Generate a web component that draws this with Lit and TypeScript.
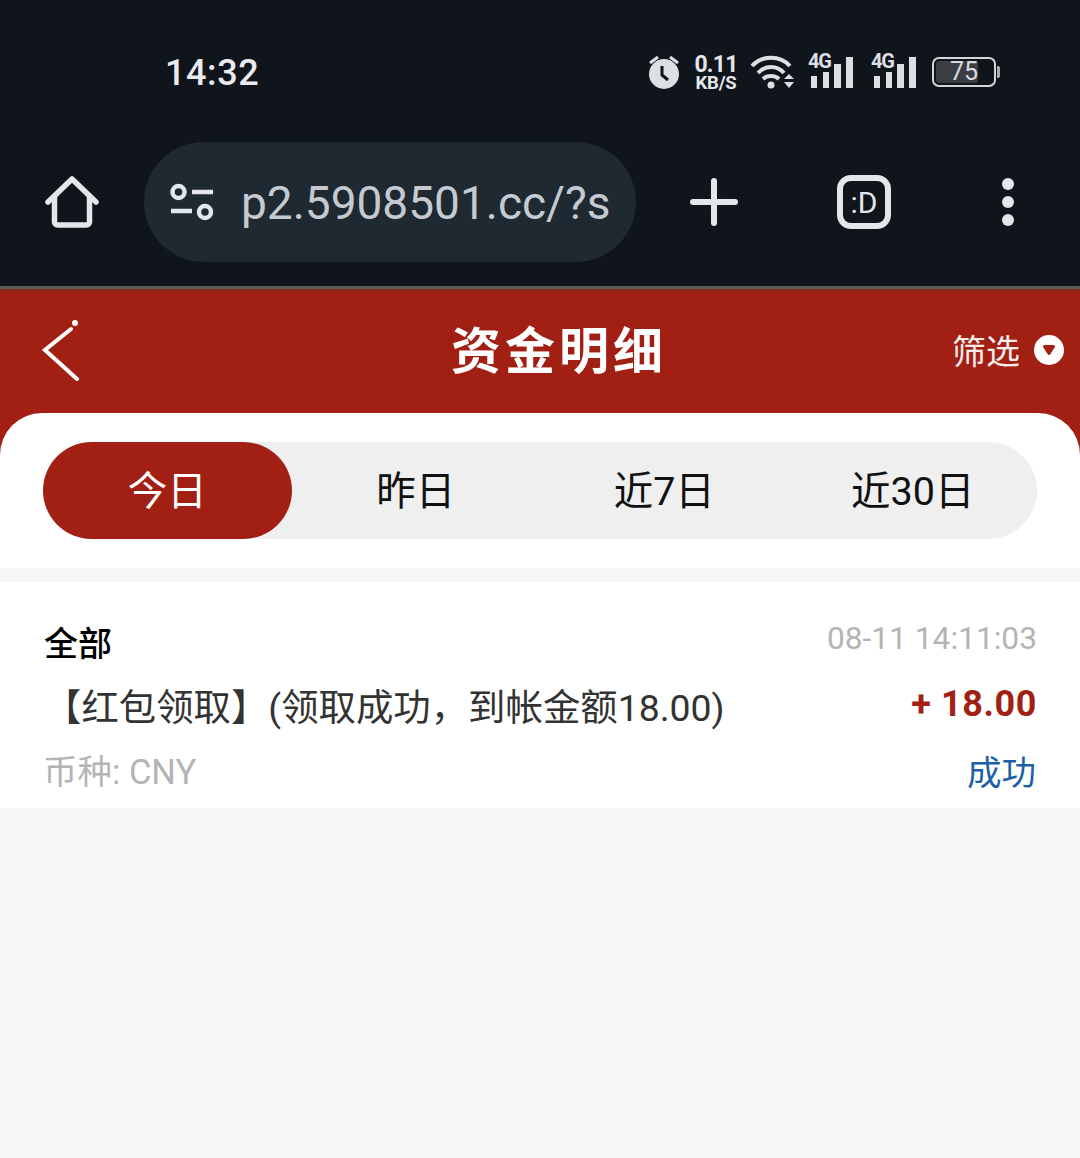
import { LitElement, html, css } from "lit";
import { customElement } from "lit/decorators.js";

@customElement("app-root")
export class AppRoot extends LitElement {
  static styles = css`
    :host { display: block; width: 1080px; height: 1158px; overflow: hidden; background: #f6f6f6;
      font-family: Roboto, "Noto Sans CJK SC", sans-serif; }
    .chrome { height: 286px; background: #10141b; color: #e3e6ea; box-sizing: border-box; }
    .status { height: 142px; display: flex; align-items: center; box-sizing: border-box; padding: 2px 0 0 165px; }
    .time { font-size: 36px; font-weight: 500; letter-spacing: 0.6px; color: #e8eaed; margin-top: 2px; width: 482px; }
    .sicons { display: flex; align-items: center; }
    .sicons svg { display: block; }
    .speed { display: flex; flex-direction: column; align-items: center; margin: 0 13px 0 14px; font-weight: 700; color: #e3e6ea; line-height: 1; width: 42px; }
    .speed b { font-size: 23px; line-height: 22px; letter-spacing: -0.8px; font-weight: 700; }
    .speed i { font-size: 18.5px; line-height: 15px; font-style: normal; letter-spacing: -0.2px; }
    .g4 { position: relative; width: 46px; height: 34px; margin-right: 17px; }
    .g4 span { position: absolute; left: 0; top: -4px; font-size: 20px; line-height: 20px; font-weight: 700; letter-spacing: -1.2px; color: #dcdfe3; }
    .batt { position: relative; width: 64px; height: 30px; border: 2px solid #d3d6da; border-radius: 7px; box-sizing: border-box; margin-left: -2px; }
    .batt .fill { position: absolute; left: 2px; top: 2px; bottom: 2px; width: 42px; border-radius: 3px; background: #3a3d42; }
    .batt .n { position: absolute; left: 0; top: 0; width: 60px; text-align: center; font-size: 25px; line-height: 26px; font-weight: 400; color: #d8dbdf; }
    .cap { width: 3px; height: 12px; background: #a9acb0; border-radius: 0 2px 2px 0; margin-left: 1px; }
    .toolbar { display: flex; align-items: center; height: 120px; padding-left: 44px; }
    .home { width: 56px; margin-right: 44px; }
    .pill { width: 492px; height: 120px; border-radius: 60px; background: #1f2932; display: flex; align-items: center; box-sizing: border-box; padding-left: 25px; }
    .url { font-size: 46px; color: #c4cad0; margin-left: 26px; white-space: nowrap; font-weight: 400; position: relative; top: 1px; }
    .plus { margin-left: 54px; }
    .tab { width: 54px; height: 54px; margin-left: 99px; box-sizing: border-box; border: 6px solid #e3e6ea; border-radius: 14px; display: flex; align-items: center; justify-content: center; font-size: 30px; color: #e3e6ea; }
    .dots { margin-left: 111px; display: flex; flex-direction: column; gap: 6px; }
    .dots i { display: block; width: 12px; height: 12px; border-radius: 50%; background: #e3e6ea; }
    .rule { height: 3px; background: #5f5d5c; }
    .header { height: 124px; background: linear-gradient(#8e2418 0 3px, #a21f14 3px); color: #fff; display: flex; align-items: center; box-sizing: border-box; padding: 0 16px 0 42px; }
    .title { flex: 1; text-align: center; font-size: 50px; font-weight: 700; letter-spacing: 4px; margin-left: 84px; position: relative; top: -4px; }
    .filter { display: flex; align-items: center; font-size: 34px; gap: 14px; color: #f6eceb; margin-top: -3px; }
    .dot { width: 30px; height: 30px; border-radius: 50%; background: #fff; display: flex; align-items: center; justify-content: center; }
    .tabsWrap { background: #a21f14; }
    .tabs { background: #fff; border-radius: 42px 42px 0 0; padding: 29px 43px; height: 155px; box-sizing: border-box; }
    .seg { display: grid; grid-template-columns: repeat(4, 1fr); height: 97px; background: #efefef; border-radius: 49px; }
    .seg div { display: flex; align-items: center; justify-content: center; font-size: 39.5px; color: #111; border-radius: 49px; padding-bottom: 6px; box-sizing: border-box; }
    .seg .on { background: #a21f14; color: #fff; }
    .row { margin-top: 14px; background: #fff; height: 226px; box-sizing: border-box; padding: 0 43px 0 44px; display: grid; grid-template-columns: 1fr auto; grid-template-rows: 82px 82px 62px; }
    .all { font-size: 34px; font-weight: 500; color: #000; align-self: end; line-height: 40px; }
    .dt { font-size: 31.7px; color: #b4b4b4; align-self: end; line-height: 40px; margin-bottom: 5px; }
    .desc { font-size: 37.4px; color: #333; line-height: 62px; white-space: nowrap; margin-top: 13px; }
    .amt { font-size: 36px; font-weight: 700; color: #a21f14; line-height: 60px; text-align: right; letter-spacing: 0.6px; margin-top: 10px; }
    .cur { font-size: 34.5px; color: #b4b4b4; line-height: 52px; margin-left: -1px; }
    .st { font-size: 34.5px; color: #1d5fa8; line-height: 54px; text-align: right; margin: 0 1px 0 0; }
  `;

  private signal() {
    return html`<svg width="46" height="34" viewBox="0 0 46 34" style="position:absolute;left:0;top:0" fill="#dcdfe3">
      <rect x="3" y="21" width="6" height="12"/><rect x="15" y="17" width="6" height="16"/><rect x="26" y="9" width="7" height="24"/><rect x="38" y="2" width="7" height="31"/>
    </svg>`;
  }

  render() {
    return html`
      <div class="chrome">
        <div class="status">
          <div class="time">14:32</div>
          <div class="sicons">
            <svg width="34" height="36" viewBox="0 0 34 36" fill="none">
              <circle cx="17" cy="20" r="15" fill="#dcdfe3"/>
              <path d="M3 9l8-6M31 9l-8-6" stroke="#dcdfe3" stroke-width="3"/>
              <path d="M15 12v9l6 5" stroke="#10141b" stroke-width="3" fill="none"/>
            </svg>
            <div class="speed"><b>0.11</b><i>KB/S</i></div>
            <svg width="46" height="34" viewBox="0 0 46 34" fill="none" stroke="#dcdfe3" stroke-width="4" style="margin-right:12px">
              <path d="M2 11C12 0 30 0 40 11"/><path d="M8 18C15 10 27 10 34 18"/><path d="M13 24c4-4 12-4 16 0"/>
              <circle cx="21" cy="30" r="3.5" fill="#dcdfe3" stroke="none"/>
              <path d="M34 24l5-5 5 5zM34 27l5 6 5-6z" fill="#dcdfe3" stroke="none"/>
            </svg>
            <div class="g4">${this.signal()}<span>4G</span></div>
            <div class="g4">${this.signal()}<span>4G</span></div>
            <div class="batt"><div class="fill"></div><div class="n">75</div></div>
            <div class="cap"></div>
          </div>
        </div>
        <div class="toolbar">
          <svg class="home" width="56" height="56" viewBox="0 0 56 56" fill="none" stroke="#e3e6ea" stroke-width="5.5" stroke-linejoin="round" stroke-linecap="round">
            <path d="M4 28L28 5l24 23"/><path d="M10.5 22v26a3 3 0 0 0 3 3h29a3 3 0 0 0 3-3V22"/>
          </svg>
          <div class="pill">
            <svg width="46" height="38" viewBox="0 0 46 38" fill="none" stroke="#e3e6ea" stroke-width="4.5">
              <circle cx="9.5" cy="9" r="6"/><path d="M23 9h21M2 28h21"/><circle cx="36" cy="29" r="6"/>
            </svg>
            <span class="url">p2.5908501.cc/?s</span>
          </div>
          <svg class="plus" width="48" height="48" viewBox="0 0 48 48" stroke="#e3e6ea" stroke-width="6" stroke-linecap="round">
            <path d="M24 3v42M3 24h42"/>
          </svg>
          <div class="tab">:D</div>
          <div class="dots"><i></i><i></i><i></i></div>
        </div>
      </div>
      <div class="rule"></div>
      <div class="header">
        <svg width="40" height="64" viewBox="0 0 40 64" fill="none" stroke="#fff" stroke-width="4" stroke-linecap="round">
          <path d="M29 10L3 31l32 29" stroke-linejoin="miter"/><circle cx="33" cy="4" r="3" fill="#fff" stroke="none"/>
        </svg>
        <div class="title">资金明细</div>
        <div class="filter">筛选
          <span class="dot"><svg width="14" height="12" viewBox="0 0 14 12"><path d="M2.5 2.5h9L7 9.5z" fill="#a21f14" stroke="#a21f14" stroke-width="3" stroke-linejoin="round"/></svg></span>
        </div>
      </div>
      <div class="tabsWrap">
        <div class="tabs">
          <div class="seg"><div class="on">今日</div><div>昨日</div><div>近7日</div><div>近30日</div></div>
        </div>
      </div>
      <div class="row">
        <div class="all">全部</div>
        <div class="dt">08-11 14:11:03</div>
        <div class="desc">【红包领取】(领取成功，到帐金额18.00)</div>
        <div class="amt">+ 18.00</div>
        <div class="cur">币种: CNY</div>
        <div class="st">成功</div>
      </div>
    `;
  }
}
